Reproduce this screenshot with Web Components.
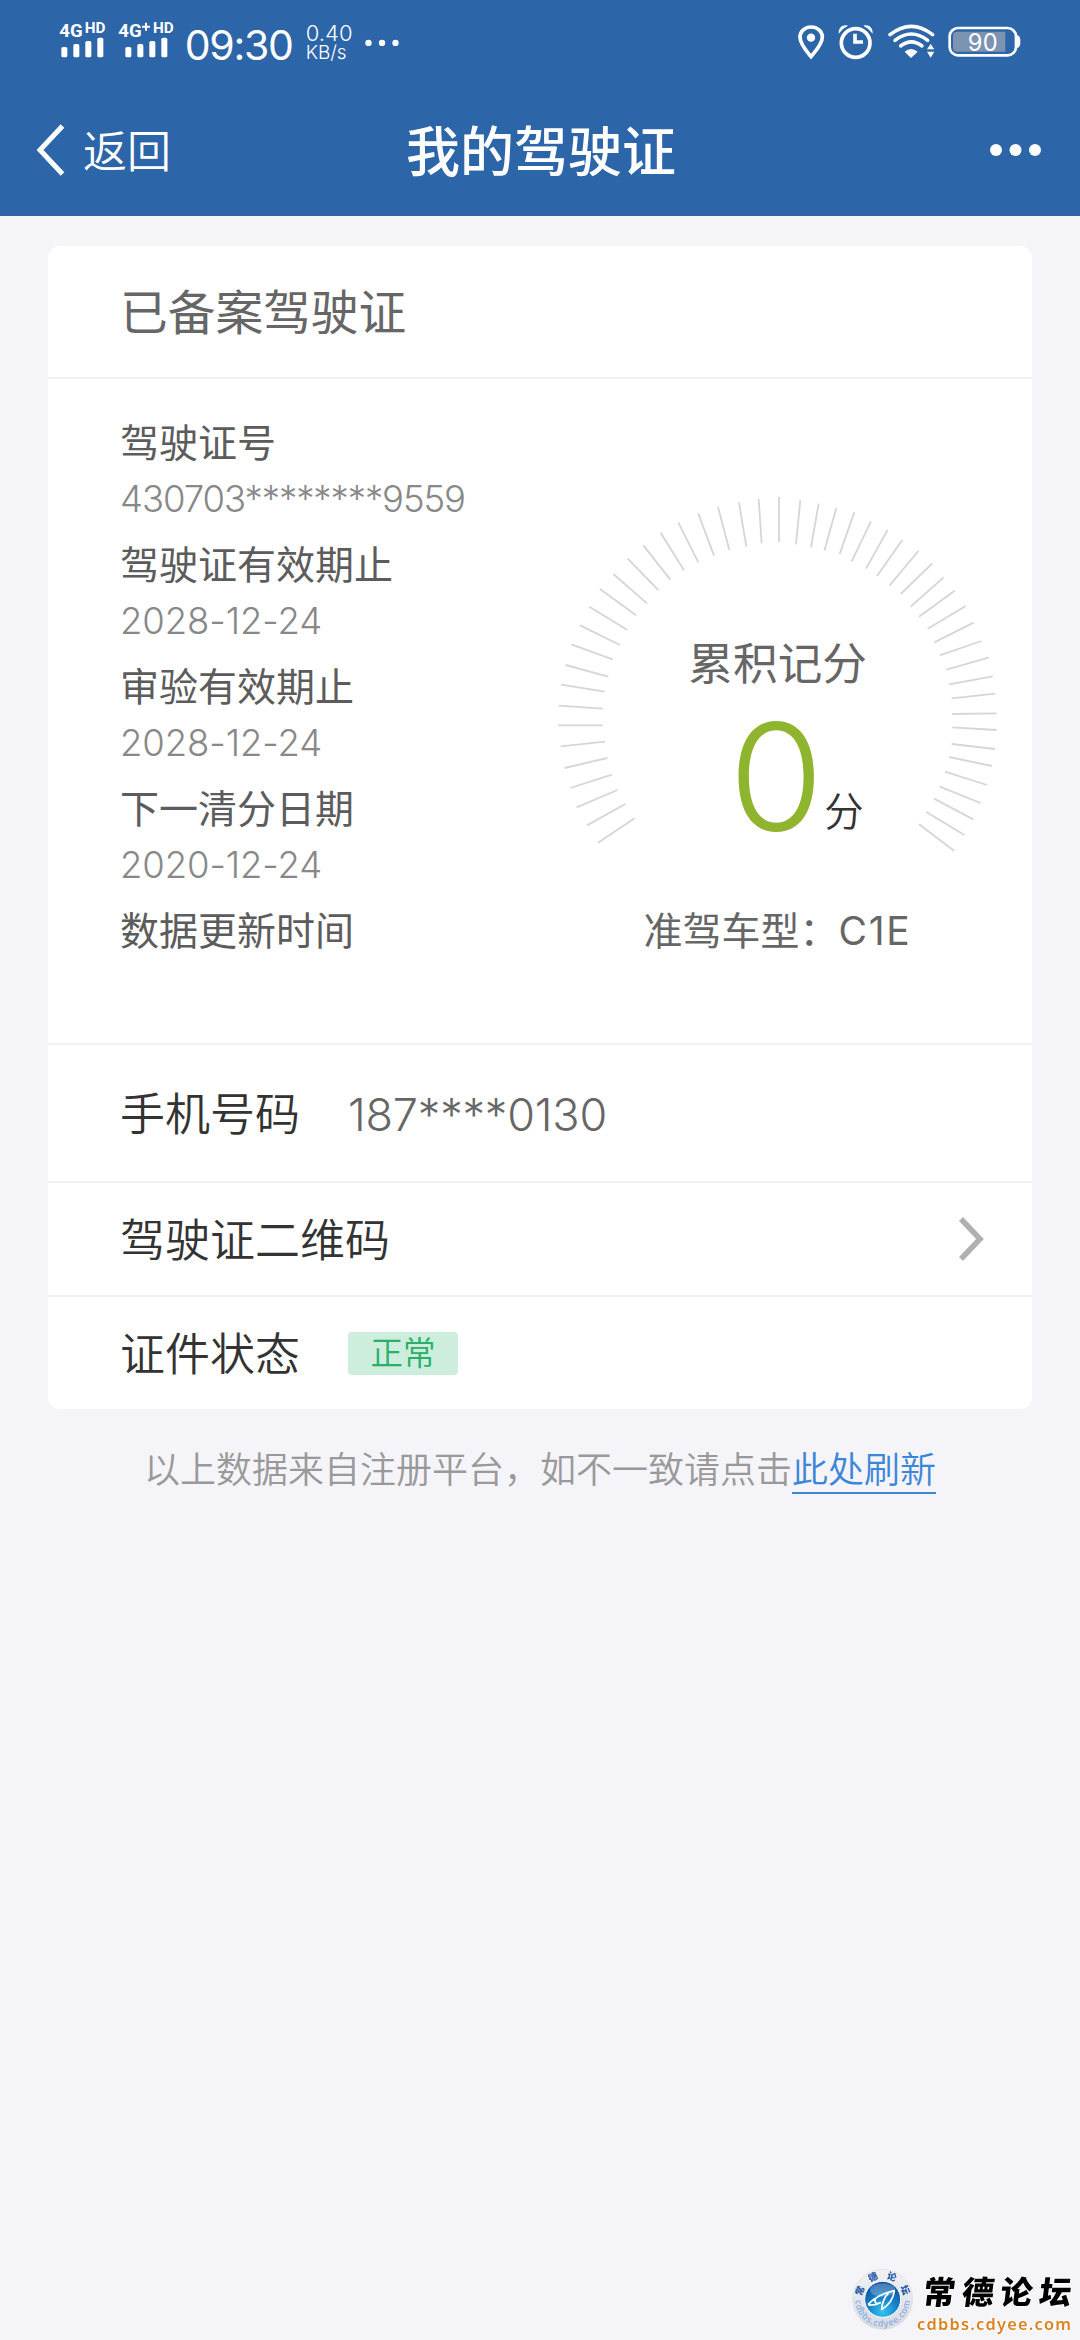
<!DOCTYPE html>
<html lang="zh-CN">
<head>
<meta charset="utf-8">
<title>我的驾驶证</title>
<style>
html,body{margin:0;padding:0}
body{width:1080px;height:2340px;overflow:hidden;background:#f4f4f9;font-family:Inter,"Noto Sans CJK SC",sans-serif;color:#333}
</style>
</head>
<body>
<licence-page></licence-page>
<script>
const define = (name, html, init) => customElements.define(name, class extends HTMLElement {
  constructor() {
    super();
    const t = document.createElement('template');
    t.innerHTML = html;
    this.attachShadow({mode: 'open'}).appendChild(t.content.cloneNode(true));
  }
  connectedCallback() { if (init) init(this, this.shadowRoot); }
});

/* Text tracked out (or in) to an advance width given in px */
define('fit-text', `<style>:host{display:inline-block;white-space:nowrap}span{display:inline-block}</style><span><slot></slot></span>`, (el, root) => {
  const s = root.querySelector('span');
  const n = el.textContent.length;
  s.style.letterSpacing = ((+el.getAttribute('w') - s.getBoundingClientRect().width) / n) + 'px';
});

define('signal-meter', `<style>:host{display:block;height:42.67px}svg{display:block;height:42.67px;overflow:visible}text{font-family:Roboto,sans-serif;font-weight:700;fill:#fff}</style><div></div>`, (el, root) => {
  const plus = el.hasAttribute('plus');
  const w = plus ? 174 : 146, b = plus ? 22 : 7;
  root.querySelector('div').innerHTML = `<svg width="${w / 3}" viewBox="0 62 ${w} 128">
    <text x="1" y="110" font-size="57" textLength="70" lengthAdjust="spacingAndGlyphs">4G</text>
    ${plus ? '<path d="M72 79h24M84 67v24" stroke="#fff" stroke-width="6"/>' : ''}
    <text x="${plus ? 105 : 77}" y="97" font-size="42" textLength="62" lengthAdjust="spacingAndGlyphs">HD</text>
    <g fill="#fff"><rect x="${b}" y="140" width="18" height="31" rx="5"/><rect x="${b + 36}" y="131" width="18" height="40" rx="5"/><rect x="${b + 72}" y="122" width="18" height="49" rx="5"/><rect x="${b + 108}" y="112" width="18" height="59" rx="5"/></g></svg>`;
});

define('status-bar', `<style>
:host{display:flex;justify-content:space-between;align-items:center;height:84px;padding:0 58.7px 0 59px;box-sizing:border-box;color:#fff}
.l,.r{display:flex;align-items:center}
signal-meter+signal-meter{margin-left:10px}
.time{font-size:41px;line-height:50px;margin:5px 0 0 9px}
.speed{display:flex;flex-direction:column;margin:1px 0 0 13px;line-height:19px;font-weight:350}
.a{font-size:22px}.b{font-size:19px}
svg{display:block;fill:none;stroke:#fff}
.r svg{height:37.33px}
.f{fill:#fff;stroke:none}
</style>
<div class="l"><signal-meter></signal-meter><signal-meter plus></signal-meter>
<fit-text class="time" w="108">09:30</fit-text>
<div class="speed"><fit-text class="a" w="47">0.40</fit-text><fit-text class="b" w="41">KB/s</fit-text></div>
<svg style="margin-left:11px" width="36" height="8" viewBox="0 0 36 8"><g class="f"><circle cx="4.500" cy="5" r="3.200"/><circle cx="18" cy="5" r="3.200"/><circle cx="31.500" cy="5" r="3.200"/></g></svg></div>
<div class="r">
<svg width="28" viewBox="50 70 84 112"><path d="M92 171C80 156 59 134 59 112A33.500 30 0 0 1 126 112C126 134 104 156 92 171Z" stroke-width="11"/><circle class="f" cx="92" cy="114" r="12.500"/></svg>
<svg style="margin-left:12.67px" width="37.33" viewBox="172 70 112 112"><circle cx="228" cy="130" r="43" stroke-width="11"/><path d="M226 102V127H250" stroke-width="11"/><path class="f" d="M177 102C176 84 188 74 205 78Q188 86 177 102ZM279 102C280 84 268 74 251 78Q268 86 279 102Z"/></svg>
<svg style="margin-left:12px" width="49.33" viewBox="320 70 148 112"><g stroke-width="10.500" stroke-linecap="round"><path d="M329 105Q393 55 457 105" /><path d="M344 122Q393 84 442 122"/><path d="M361 139Q393 114 425 139"/></g><path class="f" d="M392 175L373 156Q392 140 412 156ZM451 133L462 149H440ZM451 174L462 156H440Z"/></svg>
<svg style="margin-left:10.67px" width="74.67" viewBox="500 70 224 112"><rect x="508" y="85" width="199" height="82" rx="25" stroke-width="8"/><path d="M530 96H675V156H530Q518 156 518 144V108Q518 96 530 96Z" fill="#7c93b2" stroke="none"/><path class="f" d="M710 106Q720 110 720 120V131Q720 142 710 146Z"/><text class="f" x="562" y="153" font-family="Inter" font-size="71" textLength="90">90</text></svg>
</div>`);

define('nav-bar', `<style>
:host{display:grid;grid-template-columns:1fr auto 1fr;align-items:center;height:132px;padding:0 38px 0 35px;color:#fff;box-sizing:border-box}
.back{display:flex;align-items:center;font-size:44px;line-height:60px;font-weight:350}
.back svg{margin-right:17px}
.back span{padding-top:3px}
h1{margin:0;font-size:54px;line-height:70px;font-weight:500;padding:6px 0 0 5px}
svg{display:block}
.more{justify-self:end}
</style>
<div class="back"><svg width="31" height="54" viewBox="0 0 31 54"><path d="M27.500 3L5 27L27.500 51" fill="none" stroke="#fff" stroke-width="5"/></svg><span><slot name="back"></slot></span></div>
<h1><slot></slot></h1>
<svg class="more" width="54" height="14" viewBox="0 0 54 14" fill="#fff"><circle cx="8" cy="7" r="6"/><circle cx="27.500" cy="7" r="6"/><circle cx="47" cy="7" r="6"/></svg>`);

define('info-field', `<style>
:host{display:block;height:122px;white-space:nowrap}
.k{font-size:39px;line-height:55px;color:#5c5c5c}
.v{font-size:36.500px;line-height:58px;color:#888;font-weight:300}
</style><div class="k"><slot></slot></div><div class="v"><slot name="value"></slot></div>`);

define('score-gauge', `<style>:host{display:block}svg{display:block;overflow:visible}text{font-family:Inter,"Noto Sans CJK SC",sans-serif}</style>
<svg width="480" height="380" viewBox="0 0 1440 1140"><path id="t" fill="none" stroke="#d6d6d6" stroke-width="5.500"/>
<text x="445" y="599" font-size="134" fill="#666" textLength="536">累积记分</text>
<text transform="translate(709 1054) scale(1.03 1)" text-anchor="middle" font-size="448" font-weight="330" fill="#8fb52f">0</text>
<text x="853" y="1038" font-size="118" fill="#333" font-weight="350">分</text></svg>`, (el, root) => {
  const ticks = '174,1088,284,1015 141,1036,256,972 110,982,232,930 91,924,216,884 74,864,202,834 62,799,195,785 55,736,188,736 56,677,188,686 63,614,194,635 77,555,205,590 94,493,218,538 120,436,240,495 148,380,261,449 180,327,288,406 220,282,321,370 263,236,355,330 310,196,391,299 362,158,432,271 415,128,475,247 475,101,522,227 534,81,568,210 597,68,619,200 656,57,665,190 717,51,717,186 781,60,768,193 836,71,813,202 889,84,853,212 943,97,899,222 993,124,935,244 1043,150,978,266 1087,180,1011,288 1135,213,1049,316 1177,250,1082,342 1211,292,1112,380 1244,332,1137,410 1277,378,1163,446 1301,428,1183,487 1324,483,1199,526 1346,533,1219,569 1358,589,1227,613 1366,641,1235,655 1370,700,1237,702 1370,750,1237,742 1365,807,1235,792 1356,858,1227,831 1341,915,1215,875 1322,969,1199,920 1300,1018,1182,956 1273,1065,1159,996 1242,1112,1137,1033';
  root.getElementById('t').setAttribute('d', ticks.split(' ').map(s => { const p = s.split(','); return `M${p[0]} ${p[1]}L${p[2]} ${p[3]}`; }).join(''));
});

define('card-row', `<style>
:host{display:flex;align-items:center;box-sizing:border-box;border-top:2px solid #f1f1f3;height:114px;padding:0 48px 0 72px;font-size:45px;line-height:60px;font-weight:350;color:#333}
.k{padding-top:3px}
.v{margin-left:auto}
:host([inline]) .v{margin-left:48px}
</style><div class="k"><slot></slot></div><div class="v"><slot name="value"></slot></div>`);

define('state-tag', `<style>:host{display:block;width:110px;height:43px;border-radius:4px;background:#cdeddd;color:#2aae69;font-size:32.500px;line-height:44px;text-align:center;font-weight:350}</style><slot></slot>`);

define('site-mark', `<style>:host{display:block;position:fixed;right:0;bottom:0;width:240px;height:90px}svg{display:block}</style>
<svg width="240" height="90" viewBox="0 0 720 270"><defs>
<radialGradient id="g" cx=".5" cy=".85" r=".8"><stop offset="0" stop-color="#35c3f0"/><stop offset=".5" stop-color="#1584cc"/><stop offset="1" stop-color="#0b4f9c"/></radialGradient>
<linearGradient id="r" x2="0" y2="1"><stop offset="0" stop-color="#f2f2f4"/><stop offset="1" stop-color="#d5dae2"/></linearGradient>
<path id="u" d="M65 148A63 63 0 0 1 191 148"/><path id="d" d="M46 148A82 82 0 0 0 210 148"/></defs>
<circle cx="128" cy="148" r="90" fill="url(#r)" stroke="#dcdce0" stroke-width="2"/>
<circle cx="128" cy="148" r="54" fill="url(#g)" stroke="#fff" stroke-width="3"/>
<ellipse cx="128" cy="120" rx="38" ry="20" fill="#fff" opacity=".25"/>
<path d="M84 164Q110 134 163 122Q160 156 125 179Q126 150 146 128M84 164Q104 168 121 158Q100 166 107 144" fill="none" stroke="#fff" stroke-width="5" stroke-linejoin="round"/>
<text font-family="Noto Sans CJK SC" font-weight="900" font-size="28" fill="#2457a8"><textPath href="#u" startOffset="9" textLength="178">常德论坛</textPath></text>
<text font-family="Noto Sans" font-weight="600" font-size="27" fill="#8fb0de"><textPath href="#d" startOffset="3" textLength="250">cdbbs.cdyee.com</textPath></text>
<text transform="translate(246 163) skewX(-7)" font-family="Noto Sans CJK SC" font-weight="900" font-size="96" fill="#000" textLength="444" stroke="#fff" stroke-width="5" paint-order="stroke">常德论坛</text>
<text x="231" y="239" font-family="Noto Sans" font-weight="600" font-size="49" fill="#dd8020" stroke="#fff" stroke-width="6" paint-order="stroke" textLength="462">cdbbs.cdyee.com</text>
</svg>`);

define('licence-page', `<style>
:host{display:flex;flex-direction:column}
header{background:#2c65a8;height:216px}
.card{margin:30px 48px 0;background:#fff;border-radius:12px;overflow:hidden;height:1163px}
h2{margin:0;box-sizing:border-box;height:131px;padding:4px 72px 0;font-size:47.700px;line-height:127px;font-weight:400;color:#666}
.info{display:flex;border-top:2px solid #f1f1f3;height:664px}
.fields{width:420px;padding:36px 0 0 72px;box-sizing:border-box}
.right{display:flex;flex-direction:column;padding-top:101px;margin-left:72px;width:480px}
.type{display:flex;justify-content:center;margin-top:43px;padding-right:5px;font-size:39px;line-height:55px;color:#666;white-space:nowrap}
card-row.tall{height:138px}
.num{color:#666;font-weight:300;font-size:45px;padding-top:3px}
footer{margin-top:34px;text-align:center;font-size:36px;line-height:54px;color:#999;font-weight:350}
a{color:#3c86d8;display:inline-block;line-height:44px;border-bottom:2px solid #3c86d8;font-weight:350}
</style>
<header><status-bar></status-bar><nav-bar><span slot="back">返回</span>我的驾驶证</nav-bar></header>
<main class="card"><h2>已备案驾驶证</h2>
<div class="info"><div class="fields">
<info-field>驾驶证号<fit-text slot="value" w="345">430703********9559</fit-text></info-field>
<info-field>驾驶证有效期止<fit-text slot="value" w="202">2028-12-24</fit-text></info-field>
<info-field>审验有效期止<fit-text slot="value" w="202">2028-12-24</fit-text></info-field>
<info-field>下一清分日期<fit-text slot="value" w="202">2020-12-24</fit-text></info-field>
<info-field>数据更新时间</info-field></div>
<div class="right"><score-gauge></score-gauge><div class="type">准驾车型：<fit-text w="73">C1E</fit-text></div></div></div>
<card-row class="tall" inline>手机号码<fit-text class="num" slot="value" w="259">187****0130</fit-text></card-row>
<card-row>驾驶证二维码<svg slot="value" style="display:block" width="26" height="46" viewBox="0 0 26 46"><path d="M3 3L22 23L3 43" fill="none" stroke="#b0b0b0" stroke-width="5.500"/></svg></card-row>
<card-row inline>证件状态<state-tag slot="value">正常</state-tag></card-row>
</main>
<footer>以上数据来自注册平台，如不一致请点击<a>此处刷新</a></footer>
<site-mark></site-mark>`);
</script>
</body>
</html>
